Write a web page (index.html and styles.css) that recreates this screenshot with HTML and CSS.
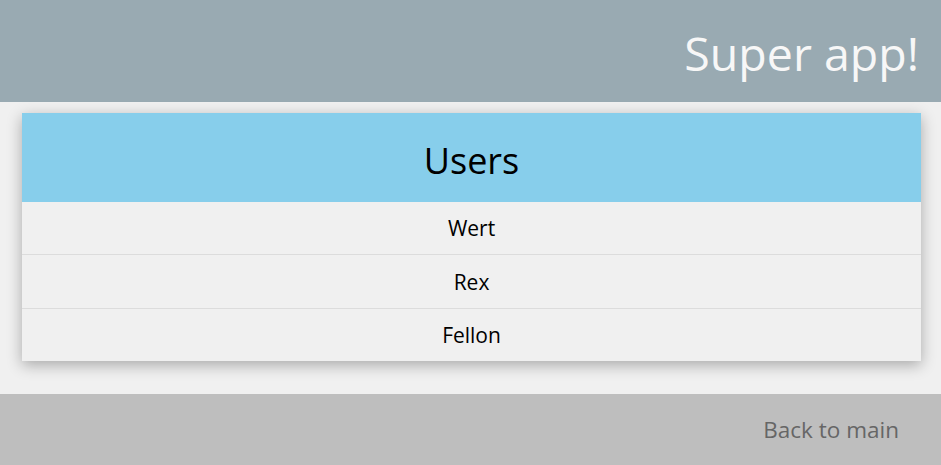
FILE: index.html
```html
<!DOCTYPE html>
<html>
<head>
<meta charset="utf-8">
<link rel="stylesheet" href="styles.css">
</head>
<body>
<div class="app">
  <header class="topbar">
    <h1 class="brand">Super app!</h1>
  </header>
  <main class="content">
    <section class="card">
      <h2 class="card-title">Users</h2>
      <ul class="user-list">
        <li class="user">Wert</li>
        <li class="user">Rex</li>
        <li class="user">Fellon</li>
      </ul>
    </section>
  </main>
  <footer class="footbar">
    <a class="back-link">Back to main</a>
  </footer>
</div>
</body>
</html>
```

FILE: styles.css
```css
html, body {
  margin: 0;
  padding: 0;
  background: #f0f0f0;
  font-family: "Open Sans", "Noto Sans", sans-serif;
}
.app {
  display: flex;
  flex-direction: column;
  height: 465px;
}
.topbar {
  height: 102px;
  background: #99aab2;
  display: flex;
  justify-content: flex-end;
  align-items: center;
  padding: 4px 22px 0 0;
  box-sizing: border-box;
}
.brand {
  margin: 0;
  font-weight: 400;
  font-size: 46.5px;
  color: #f7f7f7;
  line-height: 1;
}
.content {
  padding: 11px 20px 33px 22px;
  background: #f0f0f0;
}
.card {
  background: #f0f0f0;
  box-shadow: 0 4px 14px rgba(0, 0, 0, 0.3);
}
.card-title {
  margin: 0;
  height: 89px;
  box-sizing: border-box;
  padding-top: 5px;
  background: #87ceeb;
  display: flex;
  align-items: center;
  justify-content: center;
  font-weight: 400;
  font-size: 36px;
  color: #000;
}
.user-list {
  list-style: none;
  margin: 0;
  padding: 0;
}
.user {
  height: 52px;
  display: flex;
  align-items: center;
  justify-content: center;
  font-size: 21px;
  color: #000;
}
.user + .user {
  border-top: 1px solid #dcdcdc;
}
.user:nth-child(2) {
  height: 53px;
}
.footbar {
  flex: 1;
  background: #bebebe;
  display: flex;
  justify-content: flex-end;
  align-items: center;
  padding-right: 42px;
}
.back-link {
  font-size: 22.5px;
  color: #666;
  text-decoration: none;
}
```
